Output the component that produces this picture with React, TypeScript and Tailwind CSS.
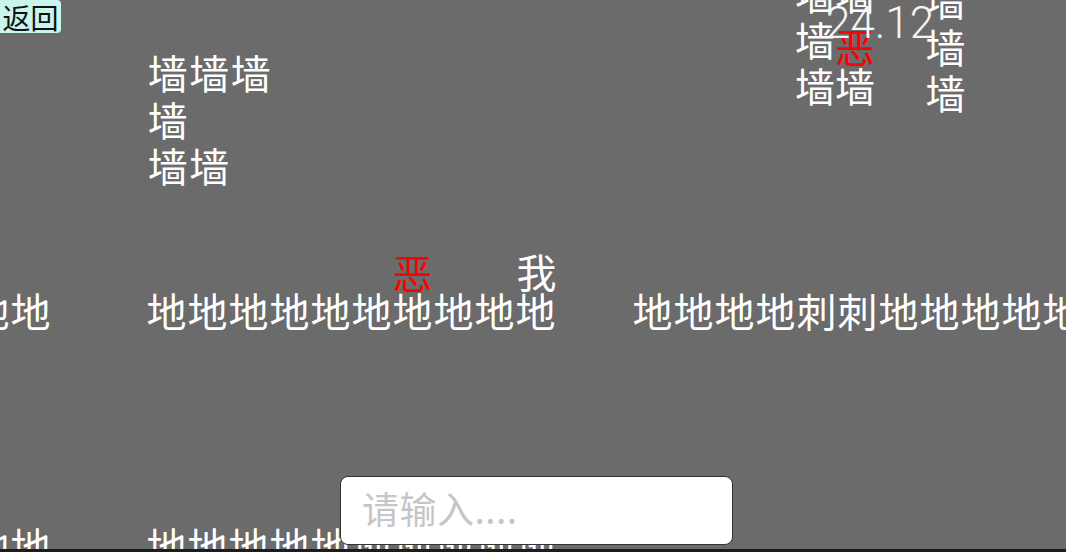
import React from "react";

const CJK = { fontFamily: '"Noto Sans CJK SC", "Noto Sans", sans-serif' };

type RowProps = { text: string; step?: number; red?: boolean };

function Row({ text, step = 41, red }: RowProps) {
  return (
    <div className={`flex h-[40px] text-[40px] leading-[40px] ${red ? "text-[#ff0000]" : "text-white"}`}>
      {Array.from(text).map((c, i) => (
        <span key={i} className="block text-center shrink-0" style={{ width: step }}>
          {c}
        </span>
      ))}
    </div>
  );
}

export default function App() {
  return (
    <div className="w-[1066px] h-[552px] flex flex-col bg-[#6b6b6b] overflow-hidden" style={CJK}>
      <div className="relative h-[549px] overflow-hidden">
        {/* walls left */}
        <div className="absolute left-[147px] top-[52px] flex flex-col gap-[6.5px]">
          <Row text="墙墙墙" step={41.5} />
          <Row text="墙" step={41.5} />
          <Row text="墙墙" step={41.5} />
        </div>

        {/* walls top right */}
        <div className="absolute left-[795px] top-[-27px] flex flex-col gap-[6px]">
          <Row text="墙墙" step={40} />
          <Row text="墙" step={40} />
          <Row text="墙墙" step={40} />
        </div>
        <div className="absolute left-[925px] top-[-21px] flex flex-col gap-[6.5px]">
          <Row text="墙" />
          <Row text="墙" />
          <Row text="墙" />
        </div>
        <div className="absolute left-[835px] top-[26px]">
          <Row text="恶" step={40} red />
        </div>

        {/* actors */}
        <div className="absolute left-[392px] top-[252px]">
          <Row text="恶" red />
        </div>
        <div className="absolute left-[516px] top-[251px]">
          <Row text="我" />
        </div>

        {/* ground rows */}
        <div className="absolute left-[-31px] top-[290px] flex flex-col gap-[195px]">
          <div className="flex">
            <Row text="地地" />
            <div className="w-[95px]" />
            <Row text="地地地地地地地地地地" />
          </div>
          <div className="flex">
            <Row text="地地" />
            <div className="w-[95px]" />
            <Row text="地地地地地地地地地地" />
          </div>
        </div>
        <div className="absolute left-[632px] top-[290px]">
          <Row text="地地地地刺刺地地地地地" />
        </div>

        {/* timer */}
        <div
          className="absolute left-[826px] top-[1px] text-[44px] leading-[44px] font-light text-[#f4f4f4]"
          style={{ fontFamily: 'Roboto, "Liberation Sans", sans-serif' }}
        >
          24.12
        </div>

        {/* back button */}
        <button className="absolute left-0 top-0 h-[33px] w-[61px] flex items-center justify-center bg-[#c9f5ec] rounded-r-[4px] text-[28px] leading-none text-[#111]">
          返回
        </button>

        {/* input */}
        <div className="absolute left-[340px] top-[476px] w-[393px] h-[69px] bg-white border border-[#333] rounded-[8px] flex items-center pl-[21px] pb-[4px]">
          <span className="text-[37px] leading-none text-[#c6c6c6] tracking-[0.5px]">请输入....</span>
        </div>
      </div>
      <div className="h-[3px] bg-[#1c1c1c]" />
    </div>
  );
}
